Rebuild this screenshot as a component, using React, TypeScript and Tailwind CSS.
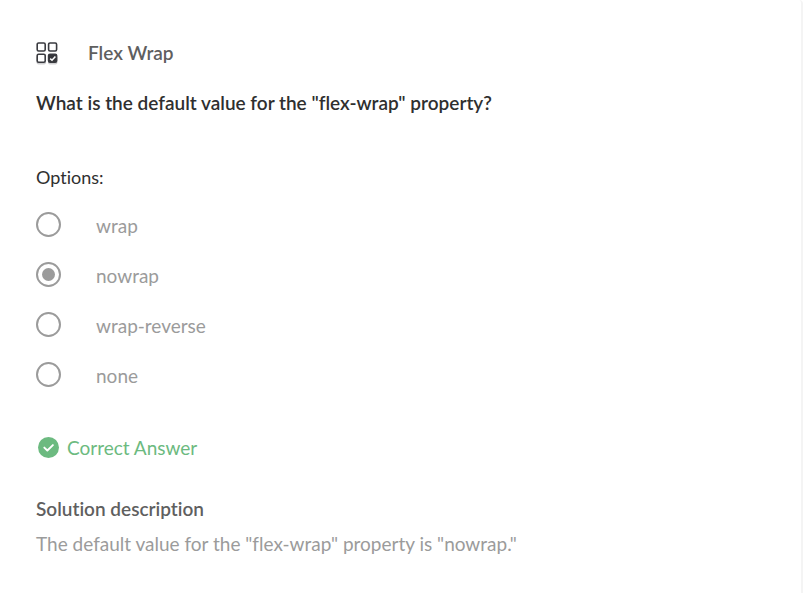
import React, { useState } from "react";

const options = ["wrap", "nowrap", "wrap-reverse", "none"];

function QuizIcon() {
  return (
    <svg className="shrink-0" width="22" height="23" viewBox="0 0 22 23" fill="none" aria-hidden="true">
      <rect x="0.5" y="13.5" width="9.5" height="9" rx="2" fill="#cfcfd1" />
      <rect x="12" y="13.5" width="9.5" height="9" rx="2" fill="#cfcfd1" />
      <g stroke="#3a3b40" strokeWidth="1.6">
        <rect x="1.2" y="1" width="8" height="8" rx="1.4" fill="#fff" />
        <rect x="12.6" y="1" width="8" height="8" rx="1.4" fill="#fff" />
        <rect x="1.2" y="12.2" width="8" height="8" rx="1.4" fill="#fff" />
        <rect x="12.6" y="12.2" width="8" height="8" rx="1.4" fill="#35363b" />
      </g>
      <path d="M14.2 16.6l1.8 1.6 3.4-3.8" stroke="#fff" strokeWidth="1.5" />
    </svg>
  );
}

function CorrectIcon() {
  return (
    <svg className="shrink-0" width="21" height="21" viewBox="0 0 22 22" fill="none" aria-hidden="true">
      <circle cx="11" cy="11" r="11" fill="#6cba80" />
      <path d="M6.6 11.1l3.2 3.1 5.8-5.7" stroke="#fff" strokeWidth="2" strokeLinecap="round" strokeLinejoin="round" />
    </svg>
  );
}

export default function App() {
  const [selected, setSelected] = useState("nowrap");
  return (
    <main className="min-h-screen rounded-tr border-r-2 border-[#f4f4f4] bg-white px-9 pt-[41px] pb-9 font-['Lato',sans-serif] text-[19px] leading-6 text-[#9b9b9b] [font-variant-ligatures:none]">
      <header className="flex items-center gap-[30px]">
        <QuizIcon />
        <h1 className="font-semibold text-[#5f5f5f]">Flex Wrap</h1>
      </header>
      <h2 className="mt-[26px] font-semibold text-[#2f2f2f]">
        What is the default value for the "flex-wrap" property?
      </h2>
      <fieldset className="mt-[50px]">
        <legend className="mb-2.5 text-lg leading-6 text-[#2f2f2f]">Options:</legend>
        {options.map((option) => (
          <label key={option} className="flex h-[50px] items-center gap-[35px]">
            <input
              type="radio"
              name="answer"
              value={option}
              checked={selected === option}
              onChange={() => setSelected(option)}
              className="grid size-[25px] shrink-0 appearance-none place-items-center rounded-full border-2 border-[#9b9b9b] before:size-[13px] before:rounded-full checked:before:bg-[#9b9b9b]"
            />
            <span className="pt-1">{option}</span>
          </label>
        ))}
      </fieldset>
      <p className="mt-[35px] flex items-center gap-2 pl-0.5 text-[#6cba80]">
        <CorrectIcon />
        <span className="pt-0.5">Correct Answer</span>
      </p>
      <h3 className="mt-[37px] font-semibold text-[#5f5f5f]">Solution description</h3>
      <p className="mt-[11px]">The default value for the "flex-wrap" property is "nowrap."</p>
    </main>
  );
}
